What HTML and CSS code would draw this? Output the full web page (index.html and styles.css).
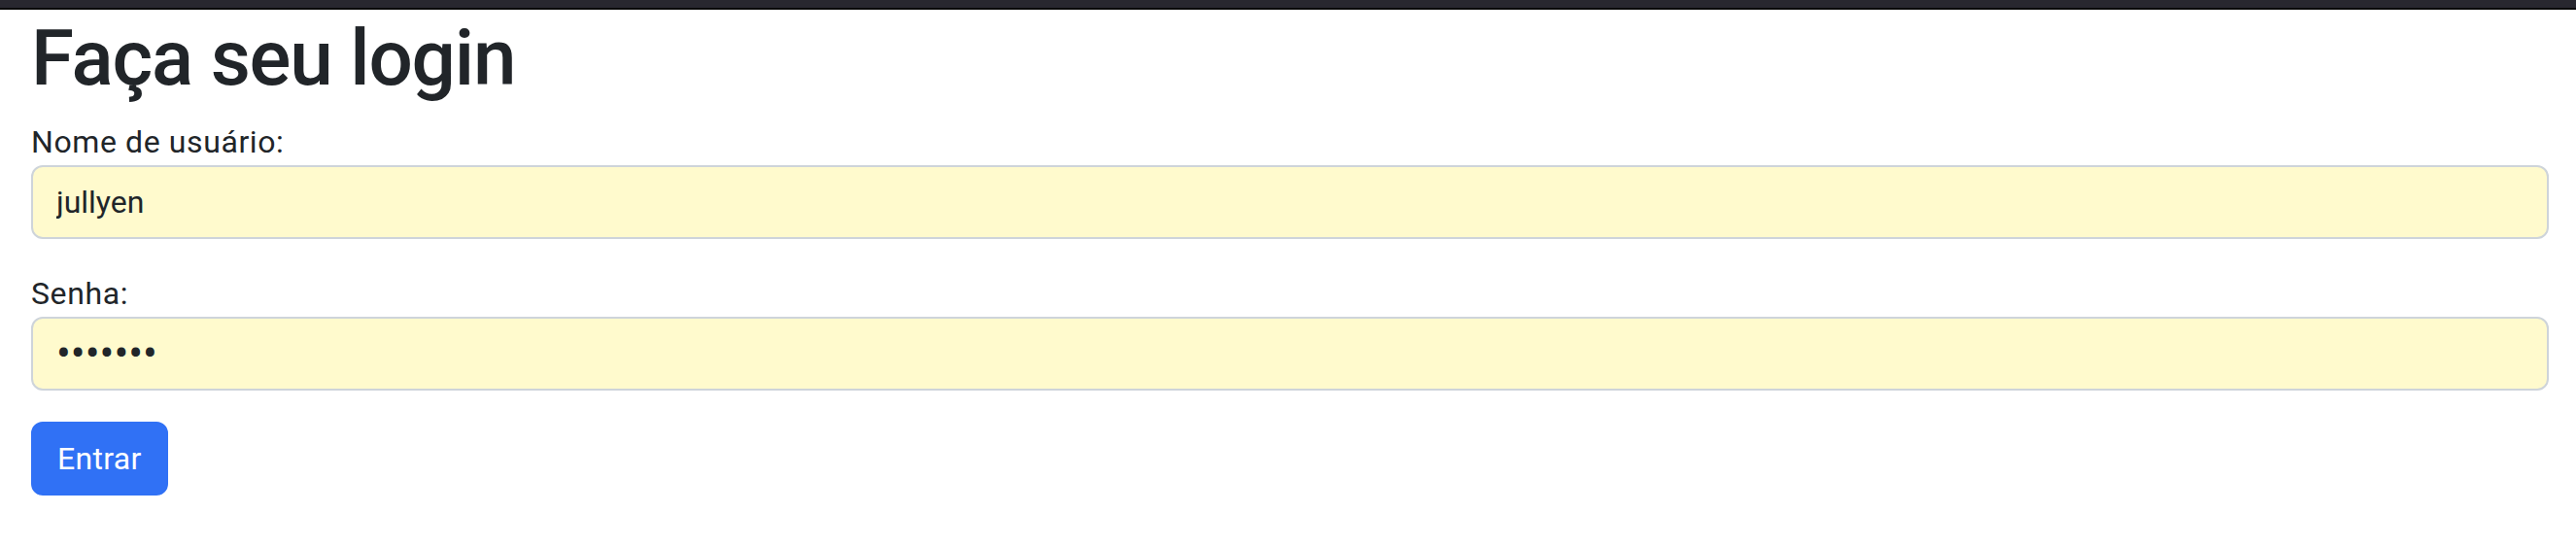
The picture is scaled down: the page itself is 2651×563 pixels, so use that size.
FILE: index.html
```html
<!DOCTYPE html>
<html lang="pt-BR">
<head>
<meta charset="utf-8">
<title>Login</title>
<link rel="stylesheet" href="styles.css">
</head>
<body>
<div class="topbar"></div>
<main class="container">
  <h1 class="title">Faça seu login</h1>
  <form class="form">
    <div class="field">
      <label class="label" for="user">Nome de usuário:</label>
      <input class="control" id="user" type="text" value="jullyen">
    </div>
    <div class="field">
      <label class="label" for="pass">Senha:</label>
      <input class="control control-pass" id="pass" type="password" value="1234567">
    </div>
    <button class="btn" type="button">Entrar</button>
  </form>
</main>
</body>
</html>
```

FILE: styles.css
```css
* { box-sizing: border-box; }
html, body { margin: 0; padding: 0; background: #fff; }
body {
  font-family: Roboto, "Liberation Sans", sans-serif;
  color: #212529;
  font-size: 32px;
  line-height: 1.5;
}
.topbar {
  height: 10px;
  background: #28272f;
  border-bottom: 2px solid #0a0a0a;
}
.container {
  padding: 2px 28px 0 32px;
}
.title {
  margin: 0 0 14px;
  font-size: 80px;
  font-weight: 500;
  line-height: 1.2;
  letter-spacing: -1.2px;
}
.form { display: flex; flex-direction: column; }
.field {
  display: flex;
  flex-direction: column;
  margin-bottom: 32px;
}
.label {
  display: block;
  font-size: 32px;
  line-height: 48px;
  letter-spacing: 0.6px;
}
.control {
  display: block;
  width: 100%;
  height: 76px;
  padding: 12px 24px;
  font-family: inherit;
  font-size: 32px;
  line-height: 48px;
  color: #212529;
  background: #fffacd;
  border: 2px solid #ced4da;
  border-radius: 12px;
  outline: none;
}
.control-pass {
  font-size: 44px;
  line-height: 48px;
}
.btn {
  align-self: flex-start;
  height: 76px;
  padding: 12px 25px;
  font-family: inherit;
  font-size: 32px;
  line-height: 48px;
  letter-spacing: 0.3px;
  color: #fff;
  background: #3071f5;
  border: 2px solid #3071f5;
  border-radius: 12px;
}
```
